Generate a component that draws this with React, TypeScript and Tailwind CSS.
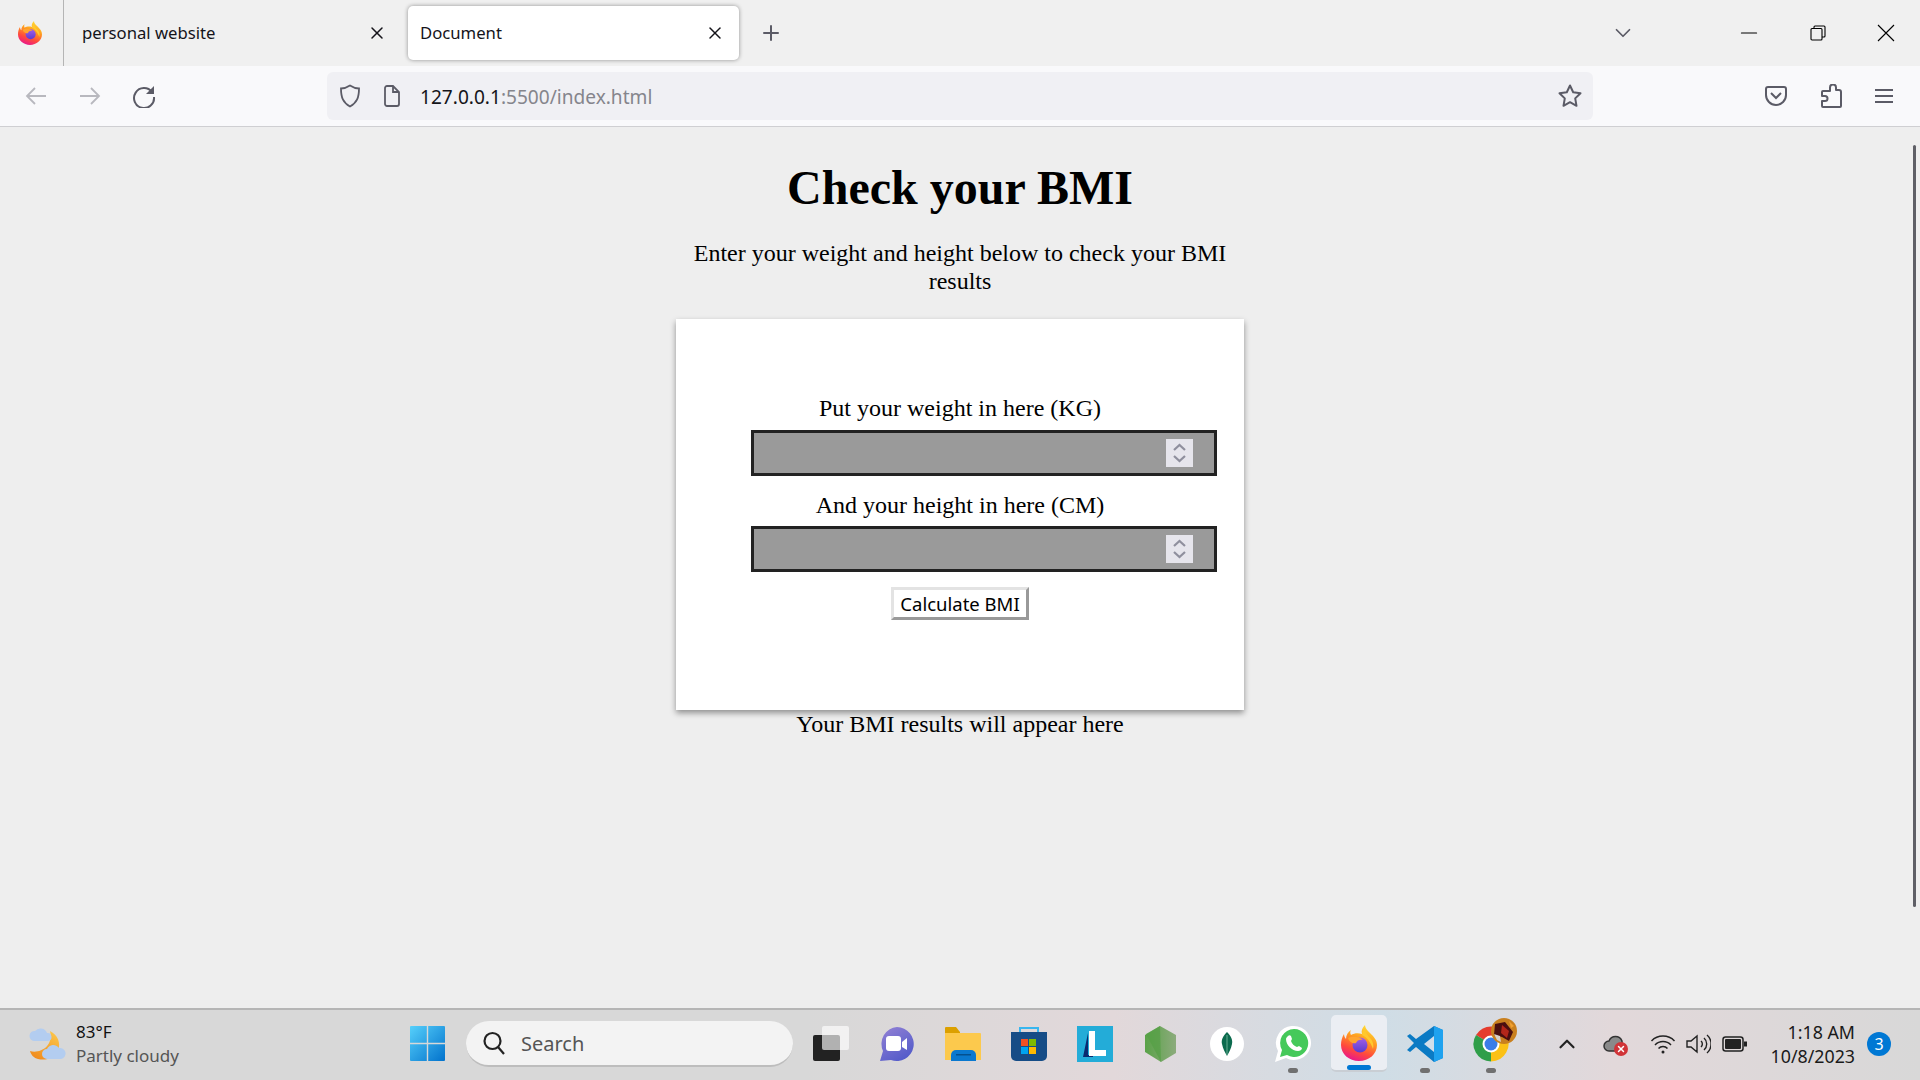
import { ChevronDown, ChevronUp, Minus, Plus, X } from "lucide-react";

const uiFont = "font-['Noto_Sans','Open_Sans',sans-serif]";
const serifFont = "font-['Liberation_Serif','Times_New_Roman',serif]";

function Firefox({ size, id }: { size: number; id: string }) {
  return (
    <svg width={size} height={size} viewBox="0 0 36 36">
      <defs>
        <linearGradient id={`${id}a`} x1="0.75" y1="0" x2="0.35" y2="1">
          <stop offset="0" stopColor="#ffe23a" />
          <stop offset="0.38" stopColor="#ffa01f" />
          <stop offset="0.72" stopColor="#ff4a3c" />
          <stop offset="1" stopColor="#e9168c" />
        </linearGradient>
        <linearGradient id={`${id}b`} x1="0.5" y1="0" x2="0.5" y2="1">
          <stop offset="0" stopColor="#a35fe6" />
          <stop offset="1" stopColor="#5a3bd0" />
        </linearGradient>
      </defs>
      <path
        d="M24 0c0 3 2 5 5 8 4 4 7 7 7 12 0 9-8 16-18 16S0 29 0 20c0-4 1-8 3-11 0 2 1 4 2 5 0-4 2-7 5-9-1 2-1 3 0 5 3-2 8-2 11-1-1-3 0-6 3-9z"
        fill={`url(#${id}a)`}
      />
      <path d="M24 3c0 4 2 7 6 11 2 3 3 6 2 10-2-6-6-12-11-14 0-3 1-5 3-7z" fill="#ffc92e" />
      <circle cx="19" cy="20" r="7.500" fill={`url(#${id}b)`} />
      <path d="M7 13c4-2 11-2 15 2-3-1-6 0-7 3-3 1-7-1-8-5z" fill="#ffa42e" />
    </svg>
  );
}

function WeatherIcon() {
  return (
    <svg width="38" height="36" viewBox="0 0 38 36">
      <defs>
        <linearGradient id="moon" x1="0.8" y1="0" x2="0.2" y2="1">
          <stop offset="0" stopColor="#fcc64a" />
          <stop offset="1" stopColor="#f08a1c" />
        </linearGradient>
      </defs>
      <path d="M22 5c8 4 11 12 8 20-3 7-12 10-20 8-4-1-7-4-8-8 9 3 24-4 20-20z" fill="url(#moon)" />
      <path
        d="M6 15a5 5 0 0 1 1-10 7 7 0 0 1 12 2 4 4 0 0 1 1 8z"
        fill="#b3cdf0"
      />
      <path
        d="M19 33a5 5 0 0 1 0-10 7 7 0 0 1 12-1 5.500 5.500 0 0 1 2 11z"
        fill="#b3cdf0"
      />
    </svg>
  );
}

function WindowsLogo() {
  return (
    <svg width="35" height="35" viewBox="0 0 35 35">
      <defs>
        <linearGradient id="win" x1="0" y1="0" x2="1" y2="1">
          <stop offset="0" stopColor="#56d0fb" />
          <stop offset="1" stopColor="#0272cc" />
        </linearGradient>
      </defs>
      <path
        d="M1 0h15.800v16.800H0V1a1 1 0 0 1 1-1zM18.200 0H34a1 1 0 0 1 1 1v15.800H18.200zM0 18.200h16.800V35H1a1 1 0 0 1-1-1zM18.200 18.200H35V34a1 1 0 0 1-1 1H18.200z"
        fill="url(#win)"
      />
    </svg>
  );
}

function TaskView() {
  return (
    <svg width="36" height="36" viewBox="0 0 36 36">
      <rect x="0" y="9" width="27" height="26" rx="2" fill="#222" />
      <rect x="9" y="0" width="27" height="24" rx="2" fill="#fff" fillOpacity="0.65" />
    </svg>
  );
}

function Meet() {
  return (
    <svg width="36" height="36" viewBox="0 0 36 36">
      <defs>
        <linearGradient id="meet" x1="0.2" y1="0" x2="0.8" y2="1">
          <stop offset="0" stopColor="#8f7fd4" />
          <stop offset="1" stopColor="#5059c9" />
        </linearGradient>
      </defs>
      <path d="M18 1a17 17 0 1 1-6 33l-11 1 3-10A17 17 0 0 1 18 1z" fill="url(#meet)" />
      <rect x="7" y="10" width="15" height="15" rx="3" fill="#fff" />
      <path d="M23 16l5-4v12l-5-3z" fill="#fff" />
    </svg>
  );
}

function Folder() {
  return (
    <svg width="36" height="36" viewBox="0 0 36 36">
      <path d="M0 2a1 1 0 0 1 1-1h10l4 5v3H0z" fill="#dca000" />
      <path d="M0 7h35a1 1 0 0 1 1 1v26H0z" fill="#fcc94d" />
      <path d="M6 35v-6a5 5 0 0 1 5-5h15a5 5 0 0 1 5 5v6z" fill="#0a78cf" />
      <rect x="11" y="28" width="15" height="1.500" fill="#04508f" />
    </svg>
  );
}

function Store() {
  return (
    <svg width="36" height="36" viewBox="0 0 36 36">
      <path d="M9 8V2h18v6" fill="none" stroke="#38b6ef" strokeWidth="2" />
      <path d="M0 6h36v24a5 5 0 0 1-5 5H5a5 5 0 0 1-5-5z" fill="#164c86" />
      <rect x="10" y="13" width="7" height="7" fill="#f25022" />
      <rect x="18" y="13" width="7" height="7" fill="#7fba00" />
      <rect x="10" y="21" width="7" height="7" fill="#00a4ef" />
      <rect x="18" y="21" width="7" height="7" fill="#ffb900" />
    </svg>
  );
}

function LApp() {
  return (
    <svg width="36" height="36" viewBox="0 0 36 36">
      <rect width="36" height="36" fill="#23acd8" />
      <path d="M6 31l5-24v22h5v2z" fill="#0b2a6f" />
      <path d="M12 5h6v19h11v6H12z" fill="#fff" />
    </svg>
  );
}

function NodeIcon() {
  return (
    <svg width="34" height="36" viewBox="0 0 34 36">
      <defs>
        <linearGradient id="node" x1="0" y1="0" x2="1" y2="0">
          <stop offset="0" stopColor="#5aa248" />
          <stop offset="1" stopColor="#8cab7c" />
        </linearGradient>
      </defs>
      <path d="M16 0l16 9v18l-15 9-16-10V9z" fill="url(#node)" />
      <path d="M16 0L2 8l15 28z" fill="#54a044" opacity="0.7" />
    </svg>
  );
}

function Mongo() {
  return (
    <svg width="34" height="34" viewBox="0 0 34 34">
      <circle cx="17" cy="17" r="17" fill="#fff" />
      <path d="M17 5c4 4 6 8 5 12-1 5-3 8-5 12-2-4-4-7-5-12-1-4 1-8 5-12z" fill="#0c6b4e" />
      <path d="M17 8v20" stroke="#7fbfa5" strokeWidth="0.800" />
    </svg>
  );
}

function Whatsapp() {
  return (
    <svg width="36" height="36" viewBox="0 0 36 36">
      <path d="M19 0a17 17 0 1 1-8 32L0 36l3-11A17 17 0 0 1 19 0z" fill="#fff" />
      <path d="M19 3a14 14 0 1 1-7 26l-7 2 2-7A14 14 0 0 1 19 3z" fill="#45c95a" />
      <path
        d="M13 10c1-1 2-1 3 0l1 3-1 2c1 3 3 5 6 6l2-1 3 2c0 2-2 3-4 3-6 0-12-6-12-12 0-1 1-2 2-3z"
        fill="#fff"
      />
    </svg>
  );
}

function VSCode() {
  return (
    <svg width="36" height="36" viewBox="0 0 36 36">
      <path d="M27 0l9 4v28l-9 4-18-15-6 5-3-2 7-7-7-7 3-2 6 5z" fill="#0a7ac4" />
      <path d="M27 0l9 4v28l-9 4z" fill="#1fa2ef" />
      <path d="M27 10v16l-10-8z" fill="#d2deea" />
    </svg>
  );
}

function Chrome() {
  return (
    <div className="relative size-9">
      <svg width="36" height="36" viewBox="0 0 36 36">
        <path d="M18 18L3 9A17.500 17.500 0 0 1 33 9z" fill="#e53c2e" />
        <path d="M18 18L33 9A17.500 17.500 0 0 1 18 35.500z" fill="#fbc116" />
        <path d="M18 18v17.500A17.500 17.500 0 0 1 3 9z" fill="#2f9e49" />
        <circle cx="18" cy="18" r="8.500" fill="#fff" />
        <circle cx="18" cy="18" r="6.500" fill="#3b7de8" />
      </svg>
      <svg width="26" height="26" viewBox="0 0 26 26" className="absolute -top-2 left-[18px]">
        <circle cx="13" cy="13" r="13" fill="#c9801f" />
        <path d="M4 6l10-2 8 10-4 9-7-4-8-2z" fill="#4a0f10" />
        <path d="M11 7l7 6-2 7-6-5z" fill="#b3261a" />
        <path d="M3 16l6 2 1 6-4-2z" fill="#d8d0c8" />
        <path d="M18 3l5 5-3 2z" fill="#f0a030" />
      </svg>
    </div>
  );
}

const weightFields = ["Put your weight in here (KG)", "And your height in here (CM)"];

function Spinner() {
  return (
    <div className="flex h-[28px] w-[27px] flex-col items-center justify-center gap-[4px] bg-[#e6e5ec]">
      <svg width="13" height="8" viewBox="0 0 13 8" fill="none" stroke="#8f8f9d" strokeWidth="2.200">
        <path d="M1 7l5.500-5 5.500 5" />
      </svg>
      <svg width="13" height="8" viewBox="0 0 13 8" fill="none" stroke="#8f8f9d" strokeWidth="2.200">
        <path d="M1 1l5.500 5 5.500-5" />
      </svg>
    </div>
  );
}

export default function App() {
  return (
    <div className="relative flex h-screen w-full flex-col overflow-hidden bg-[#eeeeee]">
      {/* tab strip */}
      <div className={`flex h-[66px] items-center bg-[#f0f0f0] ${uiFont} text-[16.700px] text-[#15141a]`}>
        <div className="flex h-full w-[64px] items-center justify-center border-r border-[#b5b5b5] pr-[4px]">
          <Firefox size={24} id="ff1" />
        </div>
        <div className="flex w-[344px] items-center justify-between pr-[21px] pl-[18px]">
          <span>personal website</span>
          <X size={20} strokeWidth={1.800} className="text-[#15141a]" />
        </div>
        <div className="flex h-[54px] w-[331px] items-center justify-between rounded-[5px] bg-white pr-[14px] pl-[12px] shadow-[0_0_4px_rgba(0,0,0,0.4)]">
          <span>Document</span>
          <X size={20} strokeWidth={1.800} className="text-[#15141a]" />
        </div>
        <Plus size={24} strokeWidth={2} className="ml-[20px] text-[#5b5b66]" />
        <div className="flex-1" />
        <ChevronDown size={26} strokeWidth={1.600} className="mr-[78px] text-[#5b5b66]" />
        <div className="flex text-black">
          <div className="flex w-[69px] justify-center">
            <Minus size={26} strokeWidth={1} />
          </div>
          <div className="flex w-[69px] items-center justify-center">
            <svg width="16" height="16" viewBox="0 0 16 16" fill="none" stroke="#000" strokeWidth="1.100">
              <rect x="1" y="3.500" width="11" height="11.500" rx="1" />
              <path d="M4 3V2a1 1 0 0 1 1-1h9a1 1 0 0 1 1 1v9a1 1 0 0 1-1 1h-2" />
            </svg>
          </div>
          <div className="flex w-[68px] items-center justify-center">
            <svg width="18" height="18" viewBox="0 0 18 18" stroke="#000" strokeWidth="1.100">
              <path d="M1 1l16 16M17 1L1 17" />
            </svg>
          </div>
        </div>
      </div>

      {/* toolbar */}
      <div className={`flex h-[61px] items-start border-b border-[#cfcfd2] bg-[#f9f9fb] pt-[6px] ${uiFont}`}>
        <div className="flex h-[48px] w-[327px] items-center pl-[25px]">
          <svg width="22" height="20" viewBox="0 0 22 20" fill="none" stroke="#b8b8be" strokeWidth="1.800">
            <path d="M21 10H2M10 2l-8 8 8 8" />
          </svg>
          <svg width="22" height="20" viewBox="0 0 22 20" fill="none" stroke="#b8b8be" strokeWidth="1.800" className="ml-[32px]">
            <path d="M1 10h19M12 2l8 8-8 8" />
          </svg>
          <svg width="24" height="24" viewBox="0 0 24 24" fill="none" className="ml-[31px]">
            <path d="M20 8a10 10 0 1 0 2 5" stroke="#5b5b66" strokeWidth="2" />
            <path d="M22 2v8h-8z" fill="#5b5b66" />
          </svg>
        </div>
        <div className="flex h-[48px] w-[1266px] items-center rounded-[6px] bg-[#f0f0f4] pl-[12px] text-[19.100px]">
          <svg width="22" height="24" viewBox="0 0 22 24" fill="none" stroke="#5b5b66" strokeWidth="1.800">
            <path d="M11 1.500c3 2 6 3 9 3 0 9-2 14-9 18C4 18.500 2 13.500 2 4.500c3 0 6-1 9-3z" />
          </svg>
          <svg width="18" height="22" viewBox="0 0 18 22" fill="none" stroke="#5b5b66" strokeWidth="1.800" className="ml-[22px]">
            <path d="M2 3a2 2 0 0 1 2-2h6l6 6v12a2 2 0 0 1-2 2H4a2 2 0 0 1-2-2zM10 1v6h6" />
          </svg>
          <span className="ml-[19px] pt-[2px] text-[#15141a]">127.0.0.1</span>
          <span className="pt-[2px] text-[#85858c]">:5500/index.html</span>
          <div className="flex-1" />
          <svg width="26" height="26" viewBox="0 0 26 26" fill="none" stroke="#5b5b66" strokeWidth="2" strokeLinejoin="round" className="mr-[10px]">
            <path d="M13 2.500l3.200 6.800 7.300 1-5.300 5.100 1.300 7.400-6.500-3.600-6.500 3.600 1.300-7.400L2.500 10.300l7.300-1z" />
          </svg>
        </div>
        <div className="flex h-[48px] flex-1 items-center text-[#5b5b66]">
          <svg width="22" height="20" viewBox="0 0 22 20" fill="none" stroke="#5b5b66" strokeWidth="2" className="ml-[172px]">
            <path d="M3 1h16a2 2 0 0 1 2 2v6a10 10 0 0 1-20 0V3a2 2 0 0 1 2-2z" />
            <path d="M6 7l5 5 5-5" />
          </svg>
          <svg width="22" height="24" viewBox="0 0 22 24" fill="none" stroke="#5b5b66" strokeWidth="2" strokeLinejoin="round" className="ml-[33px]">
            <path d="M10 5V3.500a3 3 0 0 1 6 0V6h3a2 2 0 0 1 2 2v14a1 1 0 0 1-1 1H3a1 1 0 0 1-1-1v-5h3a2.500 2.500 0 0 0 0-5H2V8a1 1 0 0 1 1-1h7z" />
          </svg>
          <svg width="20" height="16" viewBox="0 0 20 16" stroke="#5b5b66" strokeWidth="2" className="ml-[32px]">
            <path d="M1 2h18M1 8h18M1 14h18" />
          </svg>
        </div>
      </div>

      {/* page */}
      <main className={`relative flex flex-1 flex-col items-center pt-[33px] text-black ${serifFont}`}>
        <h1 className="text-[48px] leading-[55px] font-bold">Check your BMI</h1>
        <p className="mt-[25px] w-[568px] text-center text-[24px] leading-[27.600px]">
          Enter your weight and height below to check your BMI results
        </p>
        <div className="mt-[24px] flex h-[391px] w-[568px] flex-col items-center bg-white pt-[75px] shadow-[0_3px_6px_rgba(0,0,0,0.4)]">
          {weightFields.map((label, i) => (
            <div key={label} className={i === 0 ? "flex flex-col items-center" : "mt-[15px] flex flex-col items-center"}>
              <label className="text-[24px] leading-[28px]">{label}</label>
              <div className={`${i === 0 ? "mt-[8px]" : "mt-[7px]"} ml-[48px] flex h-[46px] w-[466px] items-center justify-end border-[3px] border-[#222222] bg-[#9a9a9a] pr-[21px]`}>
                <Spinner />
              </div>
            </div>
          ))}
          <button className={`mt-[15px] h-[33px] w-[138px] border-[3px] border-t-[#e3e3e3] border-r-[#999999] border-b-[#999999] border-l-[#e3e3e3] bg-white pt-[2px] text-[18.500px] leading-none ${uiFont}`}>
            Calculate BMI
          </button>
        </div>
        <p className="text-[24px] leading-[28px]">Your BMI results will appear here</p>
        {/* overlay scrollbar */}
        <div className="absolute top-[18px] right-[4px] h-[762px] w-[3px] rounded-full bg-[#5f5f66]" />
      </main>

      {/* taskbar */}
      <div className={`flex h-[72px] items-center border-t-[2px] border-[#b5b5b5] bg-[linear-gradient(90deg,#d8d8d8_0%,#d8d8d8_42%,#e2d8da_58%,#cfdde6_72%,#e2d8da_84%,#d8d8d8_100%)] pb-[3px] ${uiFont}`}>
        <div className="ml-[28px] w-[382px]">
          <div className="flex items-center gap-[10px]">
            <WeatherIcon />
            <div className="text-[17px] leading-[24px]">
              <div className="text-[#111]">83°F</div>
              <div className="text-[#555]">Partly cloudy</div>
            </div>
          </div>
        </div>
        <WindowsLogo />
        <div className="ml-[21px] flex h-[46px] w-[327px] items-center rounded-full border-b-2 border-[#bdbdbd] bg-[#f3f3f3] pl-[16px] text-[20px] text-[#555]">
          <svg width="24" height="26" viewBox="0 0 24 26" fill="none" stroke="#222" strokeWidth="2.200">
            <circle cx="10.500" cy="11" r="8" />
            <path d="M16 17l6 7" />
          </svg>
          <span className="ml-[15px] pt-[2px]">Search</span>
        </div>
        <div className="ml-[5px] flex items-center">
          <div className="flex w-[66px] justify-center"><TaskView /></div>
          <div className="flex w-[66px] justify-center"><Meet /></div>
          <div className="flex w-[66px] justify-center"><Folder /></div>
          <div className="flex w-[66px] justify-center"><Store /></div>
          <div className="flex w-[66px] justify-center"><LApp /></div>
          <div className="flex w-[66px] justify-center"><NodeIcon /></div>
          <div className="flex w-[66px] justify-center"><Mongo /></div>
          <div className="relative flex w-[66px] justify-center">
            <Whatsapp />
            <div className="absolute top-[42px] h-[5px] w-[10px] rounded-full bg-[#707070]" />
          </div>
          <div className="relative mx-[5px] flex h-[57px] w-[56px] items-center justify-center rounded-[5px] border-b-2 border-[#c9ced4] bg-[#ebeef3]">
            <Firefox size={36} id="ff2" />
            <div className="absolute bottom-[0px] h-[5px] w-[24px] rounded-full bg-[#0078d4]" />
          </div>
          <div className="relative flex w-[66px] justify-center">
            <VSCode />
            <div className="absolute top-[42px] h-[5px] w-[10px] rounded-full bg-[#707070]" />
          </div>
          <div className="relative flex w-[66px] justify-center">
            <Chrome />
            <div className="absolute top-[42px] h-[5px] w-[10px] rounded-full bg-[#707070]" />
          </div>
        </div>
        <ChevronUp size={26} strokeWidth={2} className="ml-[30px] text-[#222]" />
        <div className="relative ml-[23px] flex items-center">
          <svg width="24" height="18" viewBox="0 0 24 18" fill="#8a8a8a" stroke="#333" strokeWidth="1.500">
            <path d="M6 16a5 5 0 0 1 0-10 7 7 0 0 1 13 0v10z" />
          </svg>
          <div className="absolute top-[7px] left-[11px] flex size-[14px] items-center justify-center rounded-full bg-[#d13438] text-white">
            <X size={10} strokeWidth={3.500} />
          </div>
        </div>
        <svg width="26" height="20" viewBox="0 0 26 20" fill="none" stroke="#222" strokeWidth="1.500" className="ml-[23px]">
          <path d="M1.500 7a16 16 0 0 1 23 0M5 11a11 11 0 0 1 16 0M8.500 14.500a6 6 0 0 1 9 0" />
          <circle cx="13" cy="18" r="1.500" fill="#222" stroke="none" />
        </svg>
        <svg width="26" height="22" viewBox="0 0 26 22" fill="none" stroke="#222" strokeWidth="1.400" className="ml-[9px]">
          <path d="M2 8h4l6-5v16l-6-5H2zM16 8a4 4 0 0 1 0 6M19 5a8 8 0 0 1 0 12M22 2a12 12 0 0 1 0 18" />
        </svg>
        <svg width="26" height="16" viewBox="0 0 26 16" className="ml-[11px]">
          <rect x="1" y="1" width="20" height="14" rx="2.500" fill="none" stroke="#222" strokeWidth="1.500" />
          <rect x="3" y="3" width="16" height="10" rx="1" fill="#222" />
          <rect x="22" y="5.500" width="3" height="5" fill="#222" />
        </svg>
        <div className="ml-[12px] w-[95px] text-right text-[17.800px] leading-[24px] whitespace-nowrap text-[#1a1a1a]">
          <div>1:18 AM</div>
          <div>10/8/2023</div>
        </div>
        <div className="ml-[12px] flex size-[24px] items-center justify-center rounded-full bg-[#0078d4] text-[16px] text-white">3</div>
      </div>
    </div>
  );
}
